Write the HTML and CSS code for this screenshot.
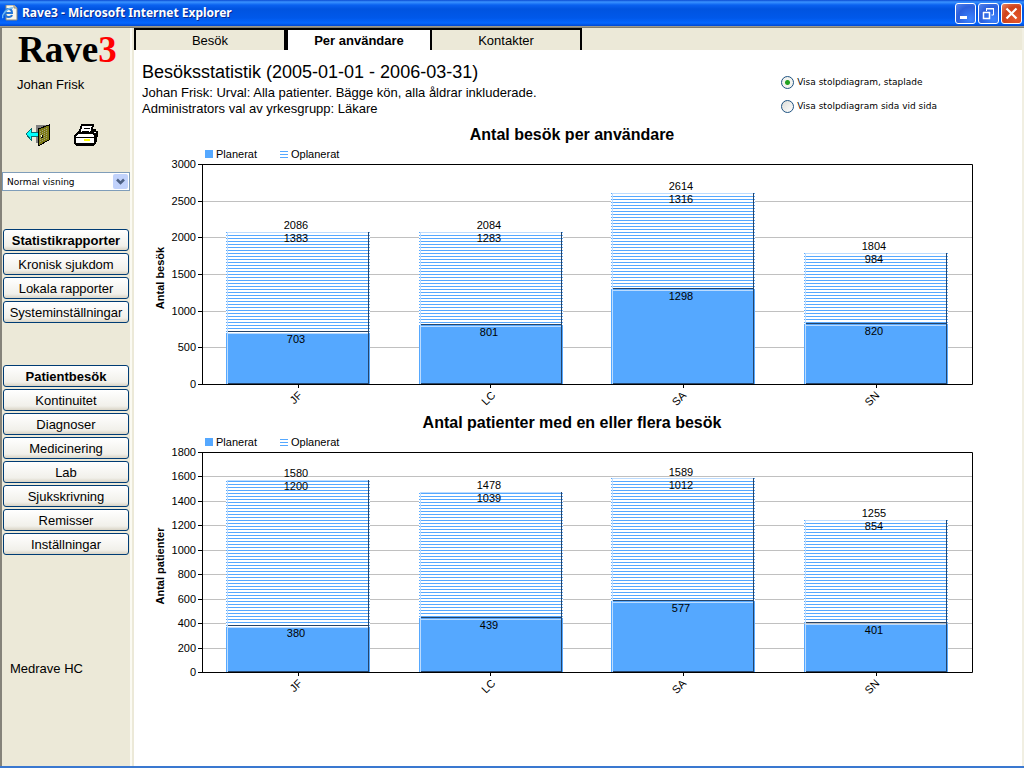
FILE: index.html
```html
<!DOCTYPE html>
<html lang="sv">
<head>
<meta charset="utf-8">
<title>Rave3 - Microsoft Internet Explorer</title>
<link rel="stylesheet" href="styles.css">
</head>
<body>
<div class="window">
  <header class="titlebar">
    <svg class="app-icon" width="16" height="16" viewBox="0 0 16 16" aria-hidden="true">
      <path d="M4 0H12L15 3V15H4Z" fill="#f8f6ec" stroke="#8b8a80"/>
      <path d="M12 0V3H15" fill="#d8d4c0" stroke="#8b8a80"/>
      <path d="M3 8H10C10 5 8.500 4 6.500 4S3 5.500 3 8S4.500 12 6.500 12C8 12 9.500 11.500 10 10" fill="none" stroke="#2275d8" stroke-width="2"/>
      <path d="M1 13C-1 10 6 2 11 3" fill="none" stroke="#6db8f4" stroke-width="1.500"/>
    </svg>
    <span class="window-title">Rave3 - Microsoft Internet Explorer</span>
    <div class="window-buttons">
      <button class="window-button" aria-label="Minimera"><svg width="19" height="19" viewBox="0 0 19 19"><path d="M4 12H11V15H4Z" fill="#fff"/></svg></button>
      <button class="window-button" aria-label="Återställ"><svg width="19" height="19" viewBox="0 0 19 19"><path d="M7.500 7V5H14.500V11H12.500M7 4.500H15" fill="none" stroke="#fff"/><path d="M4.500 8V14.500H10.500V8M4 8.500H11" fill="none" stroke="#fff" stroke-width="1.500"/></svg></button>
      <button class="window-button window-button-close" aria-label="Stäng"><svg width="19" height="19" viewBox="0 0 19 19"><path d="M4.500 4.500L14.500 14.500M14.500 4.500L4.500 14.500" stroke="#fff" stroke-width="2.200"/></svg></button>
    </div>
  </header>
  <div class="frames">
    <aside class="sidebar">
      <div class="logo">Rave<span class="logo-number">3</span></div>
      <div class="user-name">Johan Frisk</div>
      <div class="tools">
        <button class="tool" aria-label="Logga ut">
          <svg width="24" height="24" viewBox="0 0 24 24" shape-rendering="crispEdges">
            <path d="M10 2H23V4L12 9V20H10Z" fill="#808080"/>
            <path d="M12 6L23 2V17L12 23Z" fill="#7c7a16" stroke="#000"/>
            <path d="M14 8V20M16 7V19M18 6V18M20 5V17" stroke="#a3a080" stroke-dasharray="1 1"/>
            <path d="M15 12H17V15H15Z" fill="#000"/><path d="M15 12H16V14H15Z" fill="#ffc"/>
            <path d="M0 11L5 6V9H12V13H5V17Z" fill="#0ff"/>
            <path d="M0 11L5 6V9H12M12 13H5V17L0 11" fill="none" stroke="#087070"/>
          </svg>
        </button>
        <button class="tool" aria-label="Skriv ut">
          <svg width="24" height="24" viewBox="0 0 24 24" shape-rendering="crispEdges">
            <path d="M8 2H19L17 10H5Z" fill="#fff" stroke="#000" stroke-width="2"/>
            <path d="M10 5H16M8 8H15" stroke="#000" stroke-width="1"/>
            <path d="M18 6H22V8H24V14L19 17Z" fill="#000"/>
            <path d="M20 9H22M21 12H23" stroke="#fff"/>
            <path d="M4 10H19L21 12V20L19 22H3L1 20V13Z" fill="#fff" stroke="#000" stroke-width="2"/>
            <path d="M2 14H20M2 20H20" stroke="#000" stroke-width="1"/>
            <path d="M10 16H16V18H10Z" fill="#ff0"/>
            <path d="M21 11L23 13V18L20 21Z" fill="#000"/>
          </svg>
        </button>
      </div>
      <div class="view-select">
        <select class="view-select-box" aria-label="Visning"><option>Normal visning</option></select>
        <svg class="view-select-arrow" width="15" height="15" viewBox="0 0 15 15" aria-hidden="true"><rect width="15" height="15" rx="2" fill="#c1d2fb"/><path d="M4 5.500L7.500 9L11 5.500" fill="none" stroke="#4d6185" stroke-width="2.500"/></svg>
      </div>
      <nav class="menu menu-reports">
        <button class="menu-button menu-heading">Statistikrapporter</button>
        <button class="menu-button">Kronisk sjukdom</button>
        <button class="menu-button">Lokala rapporter</button>
        <button class="menu-button">Systeminställningar</button>
      </nav>
      <nav class="menu menu-visits">
        <button class="menu-button menu-heading">Patientbesök</button>
        <button class="menu-button">Kontinuitet</button>
        <button class="menu-button">Diagnoser</button>
        <button class="menu-button">Medicinering</button>
        <button class="menu-button">Lab</button>
        <button class="menu-button">Sjukskrivning</button>
        <button class="menu-button">Remisser</button>
        <button class="menu-button">Inställningar</button>
      </nav>
      <div class="clinic">Medrave HC</div>
    </aside>
    <main class="main">
      <nav class="tabs">
        <button class="tab">Besök</button>
        <button class="tab tab-active">Per användare</button>
        <button class="tab">Kontakter</button>
      </nav>
      <section class="summary">
        <div class="summary-text">
          <h1 class="summary-title">Besöksstatistik (2005-01-01 - 2006-03-31)</h1>
          <p class="summary-line">Johan Frisk: Urval: Alla patienter. Bägge kön, alla åldrar inkluderade.</p>
          <p class="summary-line">Administrators val av yrkesgrupp: Läkare</p>
        </div>
        <form class="options">
          <label class="option"><input class="radio" type="radio" name="layout" checked>Visa stolpdiagram, staplade</label>
          <label class="option"><input class="radio" type="radio" name="layout">Visa stolpdiagram sida vid sida</label>
        </form>
      </section>

      <svg class="chart" viewBox="0 0 888 288" role="img" aria-label="Antal besök per användare">
        <defs>
          <pattern id="stripes" width="3" height="3" patternUnits="userSpaceOnUse"><rect width="3" height="3" fill="#fff"/><rect width="3" height="1" fill="#55a8ff"/></pattern>
        </defs>
        <text class="chart-title" x="438" y="16">Antal besök per användare</text>
        <rect class="solid" x="71" y="26" width="8" height="8"/><text class="chart-text" x="82" y="34">Planerat</text>
        <path class="stripe-key" d="M146 27.500h8M146 30.500h8M146 33.500h8"/><text class="chart-text" x="157" y="34">Oplanerat</text>
        <text class="axis-title" transform="translate(30 154) rotate(-90)">Antal besök</text>
        <path class="grid" d="M69 77.500H838M69 113.500H838M69 150.500H838M69 187.500H838M69 223.500H838"/>
        <g class="axis-labels">
          <text x="62" y="44">3000</text><text x="62" y="81">2500</text><text x="62" y="117">2000</text><text x="62" y="154">1500</text><text x="62" y="191">1000</text><text x="62" y="227">500</text><text x="62" y="264">0</text>
        </g>
        <g>
          <rect class="striped" x="92" y="108" width="144" height="100"/><rect class="solid" x="92" y="209" width="144" height="51"/>
          <path class="light" d="M93 108.500H234M93.500 108V260M93 209.500H234"/><path class="dark" d="M94 207.500H235M234.500 108V260M94 259.500H235"/>
          <text x="162" y="105">2086</text><text x="162" y="118">1383</text><text x="162" y="219">703</text>
        </g>
        <g>
          <rect class="striped" x="285" y="108" width="144" height="93"/><rect class="solid" x="285" y="201" width="144" height="59"/>
          <path class="light" d="M286 108.500H427M286.500 108V260M286 202.500H427"/><path class="dark" d="M287 200.500H428M427.500 108V260M287 259.500H428"/>
          <text x="355" y="105">2084</text><text x="355" y="118">1283</text><text x="355" y="212">801</text>
        </g>
        <g>
          <rect class="striped" x="477" y="69" width="144" height="96"/><rect class="solid" x="477" y="165" width="144" height="95"/>
          <path class="light" d="M478 69.500H619M478.500 69V260M478 166.500H619"/><path class="dark" d="M479 164.500H620M619.500 69V260M479 259.500H620"/>
          <text x="547" y="66">2614</text><text x="547" y="79">1316</text><text x="547" y="176">1298</text>
        </g>
        <g>
          <rect class="striped" x="670" y="129" width="144" height="71"/><rect class="solid" x="670" y="200" width="144" height="60"/>
          <path class="light" d="M671 129.500H812M671.500 129V260M671 201.500H812"/><path class="dark" d="M672 199.500H813M812.500 129V260M672 259.500H813"/>
          <text x="740" y="126">1804</text><text x="740" y="139">984</text><text x="740" y="211">820</text>
        </g>
        <path class="axes" d="M64 40.500H838.500V260.500H64M68.500 40V260M64 77.500h4M64 113.500h4M64 150.500h4M64 187.500h4M64 223.500h4M164.500 261v3M356.500 261v3M549.500 261v3M742.500 261v3"/>
        <g class="category">
          <text transform="translate(169 272) rotate(-45)">JF</text><text transform="translate(362 272) rotate(-45)">LC</text><text transform="translate(553 272) rotate(-45)">SA</text><text transform="translate(746 272) rotate(-45)">SN</text>
        </g>
      </svg>

      <svg class="chart" viewBox="0 0 888 288" role="img" aria-label="Antal patienter med en eller flera besök">
        <text class="chart-title" x="438" y="16">Antal patienter med en eller flera besök</text>
        <rect class="solid" x="71" y="26" width="8" height="8"/><text class="chart-text" x="82" y="34">Planerat</text>
        <path class="stripe-key" d="M146 27.500h8M146 30.500h8M146 33.500h8"/><text class="chart-text" x="157" y="34">Oplanerat</text>
        <text class="axis-title" transform="translate(30 154) rotate(-90)">Antal patienter</text>
        <path class="grid" d="M69 64.500H838M69 89.500H838M69 113.500H838M69 138.500H838M69 162.500H838M69 187.500H838M69 211.500H838M69 236.500H838"/>
        <g class="axis-labels">
          <text x="62" y="44">1800</text><text x="62" y="68">1600</text><text x="62" y="93">1400</text><text x="62" y="117">1200</text><text x="62" y="142">1000</text><text x="62" y="166">800</text><text x="62" y="191">600</text><text x="62" y="215">400</text><text x="62" y="240">200</text><text x="62" y="264">0</text>
        </g>
        <g>
          <rect class="striped" x="92" y="68" width="144" height="146"/><rect class="solid" x="92" y="215" width="144" height="45"/>
          <path class="light" d="M93 68.500H234M93.500 68V260M93 215.500H234"/><path class="dark" d="M94 213.500H235M234.500 68V260M94 259.500H235"/>
          <text x="162" y="65">1580</text><text x="162" y="78">1200</text><text x="162" y="225">380</text>
        </g>
        <g>
          <rect class="striped" x="285" y="80" width="144" height="126"/><rect class="solid" x="285" y="206" width="144" height="54"/>
          <path class="light" d="M286 80.500H427M286.500 80V260M286 207.500H427"/><path class="dark" d="M287 205.500H428M427.500 80V260M287 259.500H428"/>
          <text x="355" y="77">1478</text><text x="355" y="90">1039</text><text x="355" y="217">439</text>
        </g>
        <g>
          <rect class="striped" x="477" y="66" width="144" height="123"/><rect class="solid" x="477" y="189" width="144" height="71"/>
          <path class="light" d="M478 66.500H619M478.500 66V260M478 190.500H619"/><path class="dark" d="M479 188.500H620M619.500 66V260M479 259.500H620"/>
          <text x="547" y="64">1589</text><text x="547" y="77">1012</text><text x="547" y="200">577</text>
        </g>
        <g>
          <rect class="striped" x="670" y="108" width="144" height="103"/><rect class="solid" x="670" y="212" width="144" height="48"/>
          <path class="light" d="M671 108.500H812M671.500 108V260M671 212.500H812"/><path class="dark" d="M672 210.500H813M812.500 108V260M672 259.500H813"/>
          <text x="740" y="105">1255</text><text x="740" y="118">854</text><text x="740" y="222">401</text>
        </g>
        <path class="axes" d="M64 40.500H838.500V260.500H64M68.500 40V260M64 64.500h4M64 89.500h4M64 113.500h4M64 138.500h4M64 162.500h4M64 187.500h4M64 211.500h4M64 236.500h4M164.500 261v3M356.500 261v3M549.500 261v3M742.500 261v3"/>
        <g class="category">
          <text transform="translate(169 272) rotate(-45)">JF</text><text transform="translate(362 272) rotate(-45)">LC</text><text transform="translate(553 272) rotate(-45)">SA</text><text transform="translate(746 272) rotate(-45)">SN</text>
        </g>
      </svg>
    </main>
  </div>
</div>
</body>
</html>
```
FILE: styles.css
```css
* { box-sizing: border-box; }

body {
  margin: 0;
  font-family: "Liberation Sans", Arial, sans-serif;
  font-size: 13px;
  color: #000;
}

button {
  font-family: inherit;
  color: inherit;
  padding: 0;
}

.window {
  min-height: 100vh;
  display: flex;
  flex-direction: column;
  border-bottom: 2px solid #3a78d0;
}

.titlebar {
  height: 28px;
  display: flex;
  align-items: center;
  gap: 4px;
  padding: 0 2px 2px;
  background: linear-gradient(#0a4ad2 0, #3a93ff 2px, #0a62f0 5px, #0054e0 9px, #0058ea 18px, #0567ff 23px, #0048d0 26px, #aca899 26px, #716f64 28px);
}

.app-icon { flex: none; }

.window-title {
  flex: 1;
  color: #fff;
  font-family: "Noto Sans", sans-serif;
  font-size: 12px;
  font-weight: 700;
  line-height: 26px;
  text-shadow: 1px 1px 0 #0a2a90;
}

.window-buttons { display: flex; gap: 2px; }

.window-button {
  width: 21px;
  height: 21px;
  border: 1px solid #fff;
  border-radius: 3px;
  background: radial-gradient(circle at 75% 80%, #3c83ff, #2b5fdc 60%, #5585ee);
}

.window-button svg { display: block; }

.window-button-close { background: radial-gradient(circle at 75% 80%, #e5572c, #d0421a 60%, #e98a6a); }

.frames { flex: 1; display: flex; }

.sidebar {
  width: 134px;
  flex: none;
  border-left: 2px solid #85837a;
  border-right: 2px solid #ece9d8;
  box-shadow: inset -2px 0 #fbfaf2;
  background: #ece9d8;
}

.logo {
  padding: 2px 0 0 16px;
  font-family: "Liberation Serif", serif;
  font-size: 37px;
  line-height: 40px;
  font-weight: 700;
}

.logo-number { color: #f00; }

.user-name { padding: 6px 0 0 15px; line-height: 18px; }

.tools { display: flex; gap: 24px; padding: 29px 0 0 24px; }

.tool { border: 0; background: none; width: 24px; height: 24px; }

.tool svg { display: block; }

.view-select { position: relative; margin: 25px 2px 0 0; }

.view-select-box {
  display: block;
  width: 100%;
  height: 19px;
  padding: 0 4px;
  border: 1px solid #7f9db9;
  border-radius: 0;
  background: #fff;
  appearance: none;
  color: #000;
  font-family: "DejaVu Sans", sans-serif;
  font-size: 9px;
}

.view-select-arrow { position: absolute; right: 2px; top: 2px; pointer-events: none; }

.menu {
  display: flex;
  flex-direction: column;
  gap: 2px;
  padding: 0 3px 0 1px;
}

.menu-reports { padding-top: 38px; }

.menu-visits { padding-top: 42px; }

.menu-button {
  height: 22px;
  padding-top: 1px;
  border: 1px solid #003c74;
  border-radius: 3px;
  background: linear-gradient(#fff, #f1f0ea 80%, #d9d4c6);
  font-size: 13px;
  line-height: 19px;
  white-space: nowrap;
}

.menu-heading { font-weight: 700; }

.clinic { padding: 105px 0 0 8px; line-height: 18px; }

.main {
  flex: 1;
  min-width: 0;
  border-right: 2px solid #f1efe2;
  background: #fff;
}

.tabs { display: flex; background: #ece9d8; }

.tab {
  width: 152px;
  height: 22px;
  border: solid #000;
  border-width: 2px 2px 0 2px;
  background: #ece9d8;
  font-size: 13px;
}

.tab-active { width: 144px; border-right: 0; background: #fff; font-weight: 700; }

.summary {
  display: flex;
  justify-content: space-between;
  padding: 9px 85px 7px 8px;
}

.summary-title {
  margin: 0;
  font-size: 18px;
  line-height: 26px;
  font-weight: 400;
}

.summary-line { margin: 0; line-height: 16px; }

.options {
  display: flex;
  flex-direction: column;
  gap: 8px;
  padding-top: 15px;
}

.option {
  display: flex;
  align-items: center;
  gap: 3px;
  height: 16px;
  font-family: "DejaVu Sans", sans-serif;
  font-size: 9px;
}

.radio {
  appearance: none;
  width: 13px;
  height: 13px;
  margin: 0;
  border: 1px solid #1d5281;
  border-radius: 50%;
  background: linear-gradient(135deg, #dcdcd7, #fff);
}

.radio:checked { background: radial-gradient(circle, #21a121 0 2px, #f3f3ef 3px); }

.chart { display: block; width: 100%; }

.chart text { font-size: 11px; text-anchor: middle; }

.chart .chart-text { text-anchor: start; }

.chart .chart-title { font-size: 16px; font-weight: 700; }

.chart .axis-title { font-weight: 700; }

.chart .axis-labels text { text-anchor: end; }

.chart .category text { text-anchor: end; }

.solid { fill: #55a8ff; }

.striped { fill: url(#stripes); }

.stripe-key { stroke: #55a8ff; }

.grid { stroke: #c0c0c0; }

.light { stroke: #bcdcff; fill: none; }

.dark { stroke: #26456a; fill: none; }

.axes { stroke: #000; fill: none; }
```
